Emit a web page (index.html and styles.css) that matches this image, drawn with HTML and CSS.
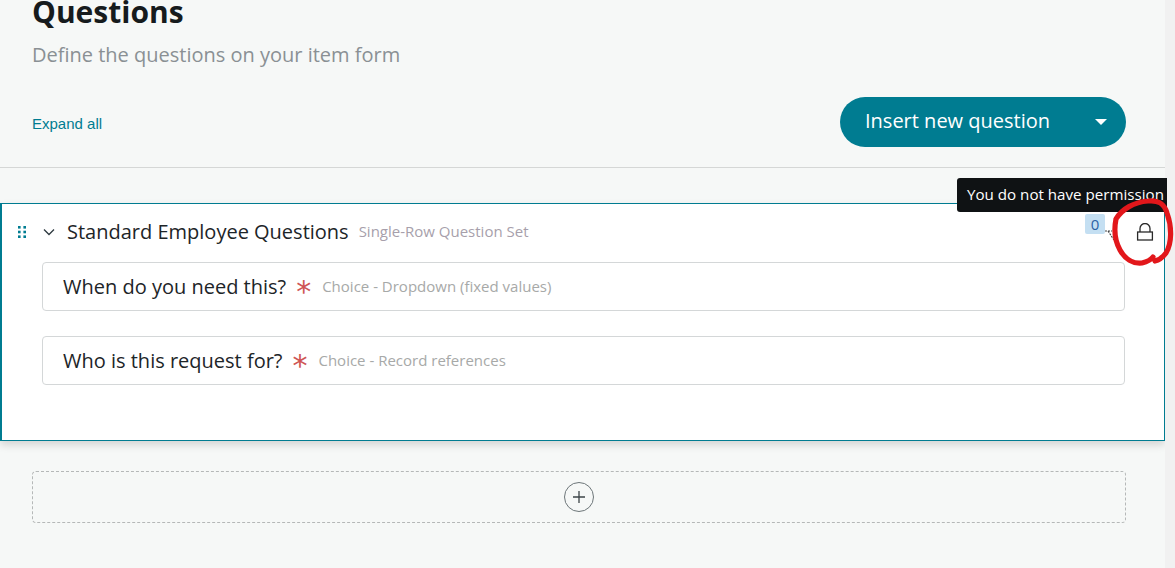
FILE: index.html
```html
<!DOCTYPE html>
<html lang="en">
<head>
<meta charset="utf-8">
<title>Questions</title>
<link rel="stylesheet" href="styles.css">
</head>
<body>
<div class="page">
  <main class="main">
    <header class="head">
      <h1 class="title">Questions</h1>
      <p class="subtitle">Define the questions on your item form</p>
      <div class="actions">
        <a class="expand" href="#">Expand all</a>
        <button class="insert" type="button">
          <span>Insert new question</span>
          <span class="caret"></span>
        </button>
      </div>
    </header>
    <section class="set">
      <div class="set-head">
        <svg class="grip" width="8" height="12" viewBox="0 0 8 12"><g fill="#007c91"><rect x="0" y="0" width="2.6" height="2.6"/><rect x="5.4" y="0" width="2.6" height="2.6"/><rect x="0" y="4.7" width="2.6" height="2.6"/><rect x="5.4" y="4.7" width="2.6" height="2.6"/><rect x="0" y="9.4" width="2.6" height="2.6"/><rect x="5.4" y="9.4" width="2.6" height="2.6"/></g></svg>
        <svg class="chev" width="12" height="8" viewBox="0 0 12 8"><path d="M1 1.5 6 6.5 11 1.5" fill="none" stroke="#2e3a40" stroke-width="1.3"/></svg>
        <span class="set-name">Standard Employee Questions</span>
        <span class="set-type">Single-Row Question Set</span>
        <span class="badge">0</span>
        <svg class="lock" width="18" height="18" viewBox="0 0 18 18"><path d="M4 9V5.5a5 5 0 0 1 10 0V9" fill="none" stroke="#2a2a2a" stroke-width="1.3"/><rect x="1.6" y="9" width="14.8" height="8" fill="none" stroke="#2a2a2a" stroke-width="1.3"/></svg>
      </div>
      <div class="question">
        <span class="q-name">When do you need this?</span>
        <span class="req">*</span>
        <span class="q-type">Choice - Dropdown (fixed values)</span>
      </div>
      <div class="question">
        <span class="q-name">Who is this request for?</span>
        <span class="req">*</span>
        <span class="q-type">Choice - Record references</span>
      </div>
    </section>
    <div class="add">
      <span class="add-btn">
        <svg width="12" height="12" viewBox="0 0 12 12"><path d="M6 0V12M0 6H12" stroke="#3c4448" stroke-width="1.3"/></svg>
      </span>
    </div>
  </main>
  <div class="track"></div>
  <div class="tooltip"><span>You do not have permission to edit this question set</span></div>
  <svg class="cursor" width="12" height="12" viewBox="0 0 12 12"><path d="M0 2H7M3 2 9 11" fill="none" stroke="#444" stroke-width="1.2" stroke-dasharray="2 1"/></svg>
  <svg class="scribble" width="75" height="75" viewBox="0 0 75 75"><path d="M16 24C22 14 34 7 48 6C58 5 64 8 67 18C72 32 72 48 66 58C63 62 60 65 55 66M16 24C14 34 15 46 20 55C25 64 33 69 42 68C46 67 50 66 53 62" fill="none" stroke="#e2171b" stroke-width="5.2" stroke-linecap="round" stroke-linejoin="round"/></svg>
</div>
</body>
</html>
```
FILE: styles.css
```css
* { box-sizing: border-box; }
html, body { margin: 0; height: 100%; overflow: hidden; }
body { font-family: "Open Sans", "Noto Sans", sans-serif; background: #f6f8f7; color: #161b1d; }
.page { position: relative; display: flex; width: 1175px; height: 568px; overflow: hidden; }
.main { width: 1165px; flex: none; }
.track { width: 10px; flex: none; background: #f1f1f1; }
.head { display: flow-root; padding: 0 39px 0 32px; height: 168px; border-bottom: 1px solid #d5d7d6; }
.title { margin: -8px 0 0; font-size: 30px; line-height: 40px; font-weight: 700; color: #161b1d; }
.subtitle { margin: 9px 0 0; font-size: 20px; line-height: 27px; color: #8a9094; }
.actions { display: flex; align-items: center; justify-content: space-between; margin-top: 29px; }
.expand { font-family: "Liberation Sans", Arial, sans-serif; font-size: 15px; color: #007c91; text-decoration: none; margin-top: 2px; }
.insert { display: flex; align-items: center; justify-content: space-between; width: 286px; height: 50px; padding: 0 19px 0 25px; border: 0; border-radius: 25px; background: #007c91; color: #fff; font: 400 20px "Open Sans", sans-serif; }
.insert span:first-child { margin-top: -3px; }
.caret { width: 0; height: 0; border-left: 6px solid transparent; border-right: 6px solid transparent; border-top: 6px solid #fff; }
.set { margin-top: 35px; height: 238px; padding: 0 39px 0 40px; background: #fff; border: 1px solid #007c91; border-left-width: 2px; box-shadow: 0 4px 8px rgba(0, 0, 0, .14); }
.set-head { position: relative; display: flex; align-items: center; height: 58px; margin-left: -40px; margin-right: -39px; padding: 0 10px 2px 16px; }
.grip { flex: none; margin-right: 17px; }
.chev { flex: none; margin-right: 12px; }
.set-name { margin-top: -2px; font-size: 20px; color: #1d2528; }
.set-type { margin-top: -2px; margin-left: 10px; font-size: 15px; color: #a79fab; }
.badge { margin-left: auto; margin-right: 31px; width: 20px; height: 20px; margin-top: -16px; background: #c4dff2; color: #2b62a4; font-size: 15px; line-height: 20px; text-align: center; border-radius: 2px; }
.lock { flex: none; }
.question { display: flex; align-items: center; height: 49px; margin-bottom: 25px; padding-left: 20px; background: #fff; border: 1px solid #d4d7d8; border-radius: 4px; }
.q-name { font-size: 20px; color: #1d2528; }
.req { margin-left: 10px; width: 15px; height: 14px; font-family: "DejaVu Sans", sans-serif; font-size: 30px; line-height: 23px; color: #cf5555; }
.q-type { margin-top: -2px; margin-left: 11px; font-size: 15px; color: #a7a9a8; }
.add { display: flex; align-items: center; justify-content: center; height: 52px; margin: 30px 39px 0 32px; border: 1px dashed #b5b8b8; border-radius: 4px; }
.add-btn { display: flex; align-items: center; justify-content: center; width: 30px; height: 30px; border: 1px solid #6d7679; border-radius: 50%; }
.tooltip { position: absolute; left: 957px; top: 178px; width: 210px; height: 34px; padding-left: 10px; overflow: hidden; background: #0f1214; border-radius: 3px 0 0 3px; color: #fff; font-size: 15.15px; line-height: 33px; white-space: nowrap; }
.cursor { position: absolute; left: 1105px; top: 229px; }
.scribble { position: absolute; left: 1100px; top: 195px; }
```
